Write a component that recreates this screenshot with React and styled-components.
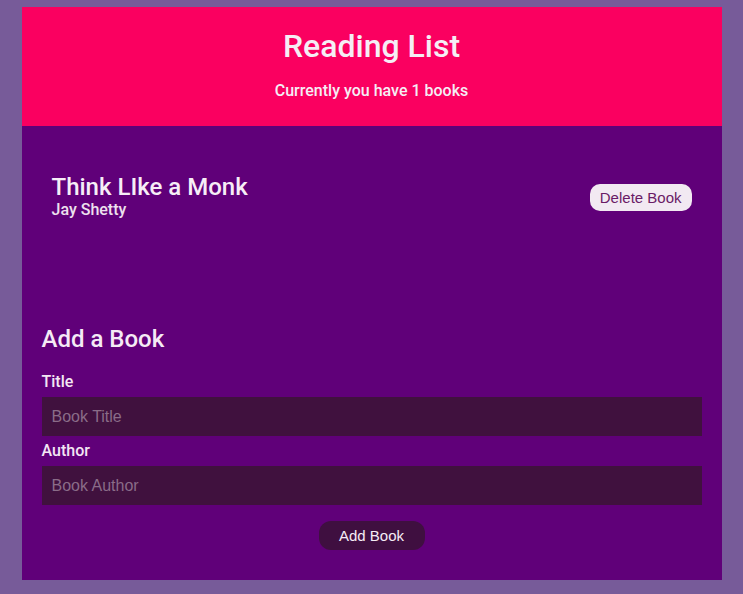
import React from 'react'
import styled, { createGlobalStyle } from 'styled-components'

const GlobalStyle = createGlobalStyle`
body {
  margin: 0;
  background: #775b99;
  font-family: 'Roboto', sans-serif;
}
`

const Wrapper = styled.div`
width: 700px;
margin: 7px auto 14px;
background: #600079;
`

const Header = styled.header`
background: #fa0060;
color: #f5eef5;
text-align: center;
padding: 22px 0 26px;
`

const Heading = styled.h1`
margin: 0;
font-size: 32px;
font-weight: 500;
line-height: 34px;
`

const Count = styled.p`
margin: 19px 0 0;
font-size: 16px;
font-weight: 500;
line-height: 18px;
`

const BookList = styled.ul`
list-style: none;
margin: 0;
padding: 47px 30px 0;
height: 152px;
`

const BookRow = styled.li`
display: flex;
align-items: center;
justify-content: space-between;
`

const BookTitle = styled.div`
font-size: 24px;
font-weight: 500;
color: #f7eef7;
line-height: 28px;
`

const BookAuthor = styled.div`
font-size: 16px;
font-weight: 500;
color: #eee0ee;
line-height: 18px;
`

const DeleteButton = styled.button`
font-family: 'Liberation Sans', Arial, sans-serif;
font-size: 15px;
color: #6a1a66;
background: #f2e9f2;
border: none;
border-radius: 10px;
height: 27px;
padding: 0 10px;
margin-top: 3px;
`

const Form = styled.form`
padding: 0 20px 30px;
`

const FormTitle = styled.h2`
margin: 0 0 20px;
font-size: 24px;
font-weight: 500;
color: #f5eaf5;
line-height: 28px;
`

const Label = styled.label`
display: block;
font-size: 16px;
font-weight: 500;
color: #f3e6f3;
line-height: 18px;
margin-bottom: 6px;
`

const Input = styled.input`
display: block;
box-sizing: border-box;
width: 100%;
height: 39px;
margin-bottom: 6px;
padding: 0 10px;
border: none;
background: #40113e;
color: #fff;
font-family: 'Liberation Sans', Arial, sans-serif;
font-size: 16px;
outline: none;
&::placeholder {
  color: #8a6c88;
}
`

const Actions = styled.div`
display: flex;
justify-content: center;
padding-top: 10px;
`

const AddButton = styled.button`
font-family: 'Liberation Sans', Arial, sans-serif;
font-size: 15px;
color: #f5ecf5;
background: #3f0f40;
border: none;
border-radius: 12px;
height: 29px;
width: 106px;
`

const books = [{ title: 'Think LIke a Monk', author: 'Jay Shetty' }]

const App = () => {
  return (
    <>
      <GlobalStyle />
      <Wrapper>
        <Header>
          <Heading>Reading List</Heading>
          <Count>Currently you have {books.length} books</Count>
        </Header>
        <BookList>
          {books.map(b => (
            <BookRow key={b.title}>
              <div>
                <BookTitle>{b.title}</BookTitle>
                <BookAuthor>{b.author}</BookAuthor>
              </div>
              <DeleteButton type='button'>Delete Book</DeleteButton>
            </BookRow>
          ))}
        </BookList>
        <Form onSubmit={e => e.preventDefault()}>
          <FormTitle>Add a Book</FormTitle>
          <Label>Title</Label>
          <Input placeholder='Book Title' />
          <Label>Author</Label>
          <Input placeholder='Book Author' />
          <Actions>
            <AddButton type='submit'>Add Book</AddButton>
          </Actions>
        </Form>
      </Wrapper>
    </>
  )
}

export default App
